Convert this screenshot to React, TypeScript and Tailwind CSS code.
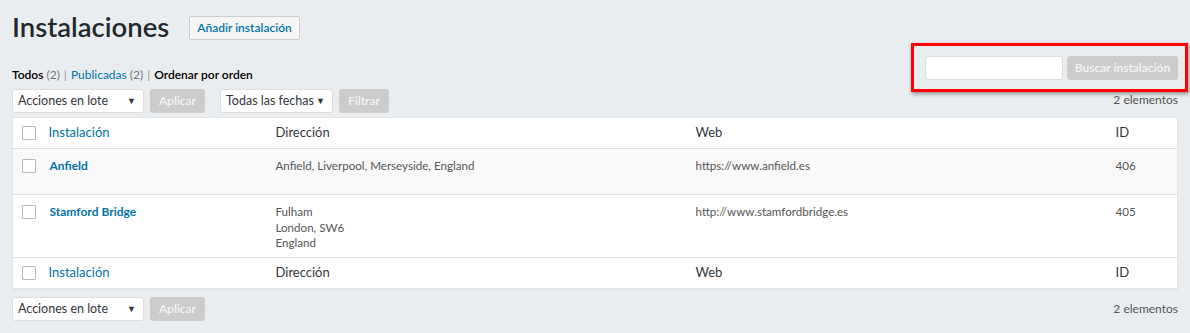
import * as React from 'react';

const rows = [
  { name: 'Anfield', dir: ['Anfield, Liverpool, Merseyside, England'], web: 'https://www.anfield.es', id: '406' },
  { name: 'Stamford Bridge', dir: ['Fulham', 'London, SW6', 'England'], web: 'http://www.stamfordbridge.es', id: '405' },
];

function Select({ label, w }: { label: string; w: string }) {
  return (
    <div className={`${w} h-6 bg-white border border-[#ddd] rounded-[3px] flex items-center justify-between pl-[5px] pr-[7px] text-[12.5px] text-[#32373c] whitespace-nowrap`}>
      <span>{label}</span>
      <span className="text-[9px] text-[#333]">▼</span>
    </div>
  );
}

function GrayButton({ label, w }: { label: string; w: string }) {
  return (
    <div className={`${w} h-6 bg-[#cccccc] rounded-[3px] flex items-center justify-center text-[12px] font-semibold text-[#f4f4f4] whitespace-nowrap`}>
      {label}
    </div>
  );
}

function Check() {
  return <div className="w-[14px] h-[14px] border border-[#b4b9be] bg-white rounded-[1px]" />;
}

function HeaderRow({ border }: { border: string }) {
  return (
    <tr className={`h-[31px] ${border}`}>
      <td className="pl-[9px]"><Check /></td>
      <td className="text-[13px] text-[#0073aa]">Instalación</td>
      <td className="text-[13px] text-[#32373c]">Dirección</td>
      <td className="text-[13px] text-[#32373c]">Web</td>
      <td className="text-[13px] text-[#32373c]">ID</td>
    </tr>
  );
}

export default function App() {
  return (
    <div className="w-[1190px] h-[333px] bg-[#eaedf0] overflow-hidden font-['Lato','Liberation_Sans',sans-serif] text-[#32373c]">
      <div className="px-3">
        <div className="flex items-center pt-[9px] h-[45px]">
          <h1 className="text-[27.5px] font-semibold text-[#23282d] leading-[36px]">Instalaciones</h1>
          <div className="ml-[20px] mt-[1px] h-[24px] px-[7px] border border-[#ccc] bg-[#f7f7f7] rounded-[2px] flex items-center text-[12px] font-semibold text-[#0073aa]">
            Añadir instalación
          </div>
        </div>

        <div className="flex justify-between items-end mt-[11px]">
          <div className="text-[12px] leading-[16px] translate-y-[3px]">
            <span className="font-semibold text-black">Todos</span> <span className="text-[#777]">(2)</span>
            <span className="text-[#999] mx-[4px]">|</span>
            <span className="text-[#0073aa]">Publicadas <span className="text-[#777]">(2)</span></span>
            <span className="text-[#999] mx-[4px]">|</span>
            <span className="font-semibold text-black">Ordenar por orden</span>
          </div>
          <div className="relative flex gap-[4px] items-center">
            <div className="w-[138px] h-[24px] bg-white border border-[#ddd] rounded-[3px]" />
            <GrayButton label="Buscar instalación" w="w-[111px]" />
            <div className="absolute left-[-14px] right-[-10px] top-[-13px] bottom-[-12px] border-[3px] border-[#f00] shadow-[1px_2px_4px_rgba(0,0,0,0.4)] pointer-events-none" />
          </div>
        </div>

        <div className="flex items-end justify-between mt-[9px]">
          <div className="flex items-center">
            <Select label="Acciones en lote" w="w-[132px]" />
            <div className="ml-[6px]"><GrayButton label="Aplicar" w="w-[55px]" /></div>
            <div className="ml-[15px]"><Select label="Todas las fechas" w="w-[113px]" /></div>
            <div className="ml-[6px]"><GrayButton label="Filtrar" w="w-[50px]" /></div>
          </div>
          <div className="text-[12px] text-[#555] pb-[4px]">2 elementos</div>
        </div>

        <table className="mt-[4px] w-[1166px] table-fixed bg-white border border-[#e5e5e5] shadow-[0_1px_1px_rgba(0,0,0,0.04)] border-collapse">
          <colgroup>
            <col className="w-[36px]" />
            <col className="w-[227px]" />
            <col className="w-[420px]" />
            <col className="w-[420px]" />
            <col />
          </colgroup>
          <thead>
            <HeaderRow border="border-b border-[#e1e1e1]" />
          </thead>
          <tbody>
            {rows.map((r, i) => (
              <tr key={r.name} className={`${i === 0 ? 'bg-[#f9f9f9] h-[46px]' : 'bg-white h-[63px]'} border-b border-[#e1e1e1] align-top`}>
                <td className="pl-[9px] pt-[10px]"><Check /></td>
                <td className="pl-[1px] pt-[9px] text-[12px] font-bold text-[#0073aa] leading-[15.5px]">{r.name}</td>
                <td className="pt-[9px] text-[11.6px] text-[#555] leading-[15.5px]">
                  {r.dir.map((d) => <div key={d}>{d}</div>)}
                </td>
                <td className="pt-[9px] text-[11.6px] text-[#555] leading-[15.5px]">{r.web}</td>
                <td className="pt-[9px] text-[11.6px] text-[#555] leading-[15.5px]">{r.id}</td>
              </tr>
            ))}
          </tbody>
          <tfoot>
            <HeaderRow border="" />
          </tfoot>
        </table>

        <div className="flex items-center justify-between mt-[8px]">
          <div className="flex items-center">
            <Select label="Acciones en lote" w="w-[132px]" />
            <div className="ml-[6px]"><GrayButton label="Aplicar" w="w-[55px]" /></div>
          </div>
          <div className="text-[12px] text-[#555]">2 elementos</div>
        </div>
      </div>
    </div>
  );
}
